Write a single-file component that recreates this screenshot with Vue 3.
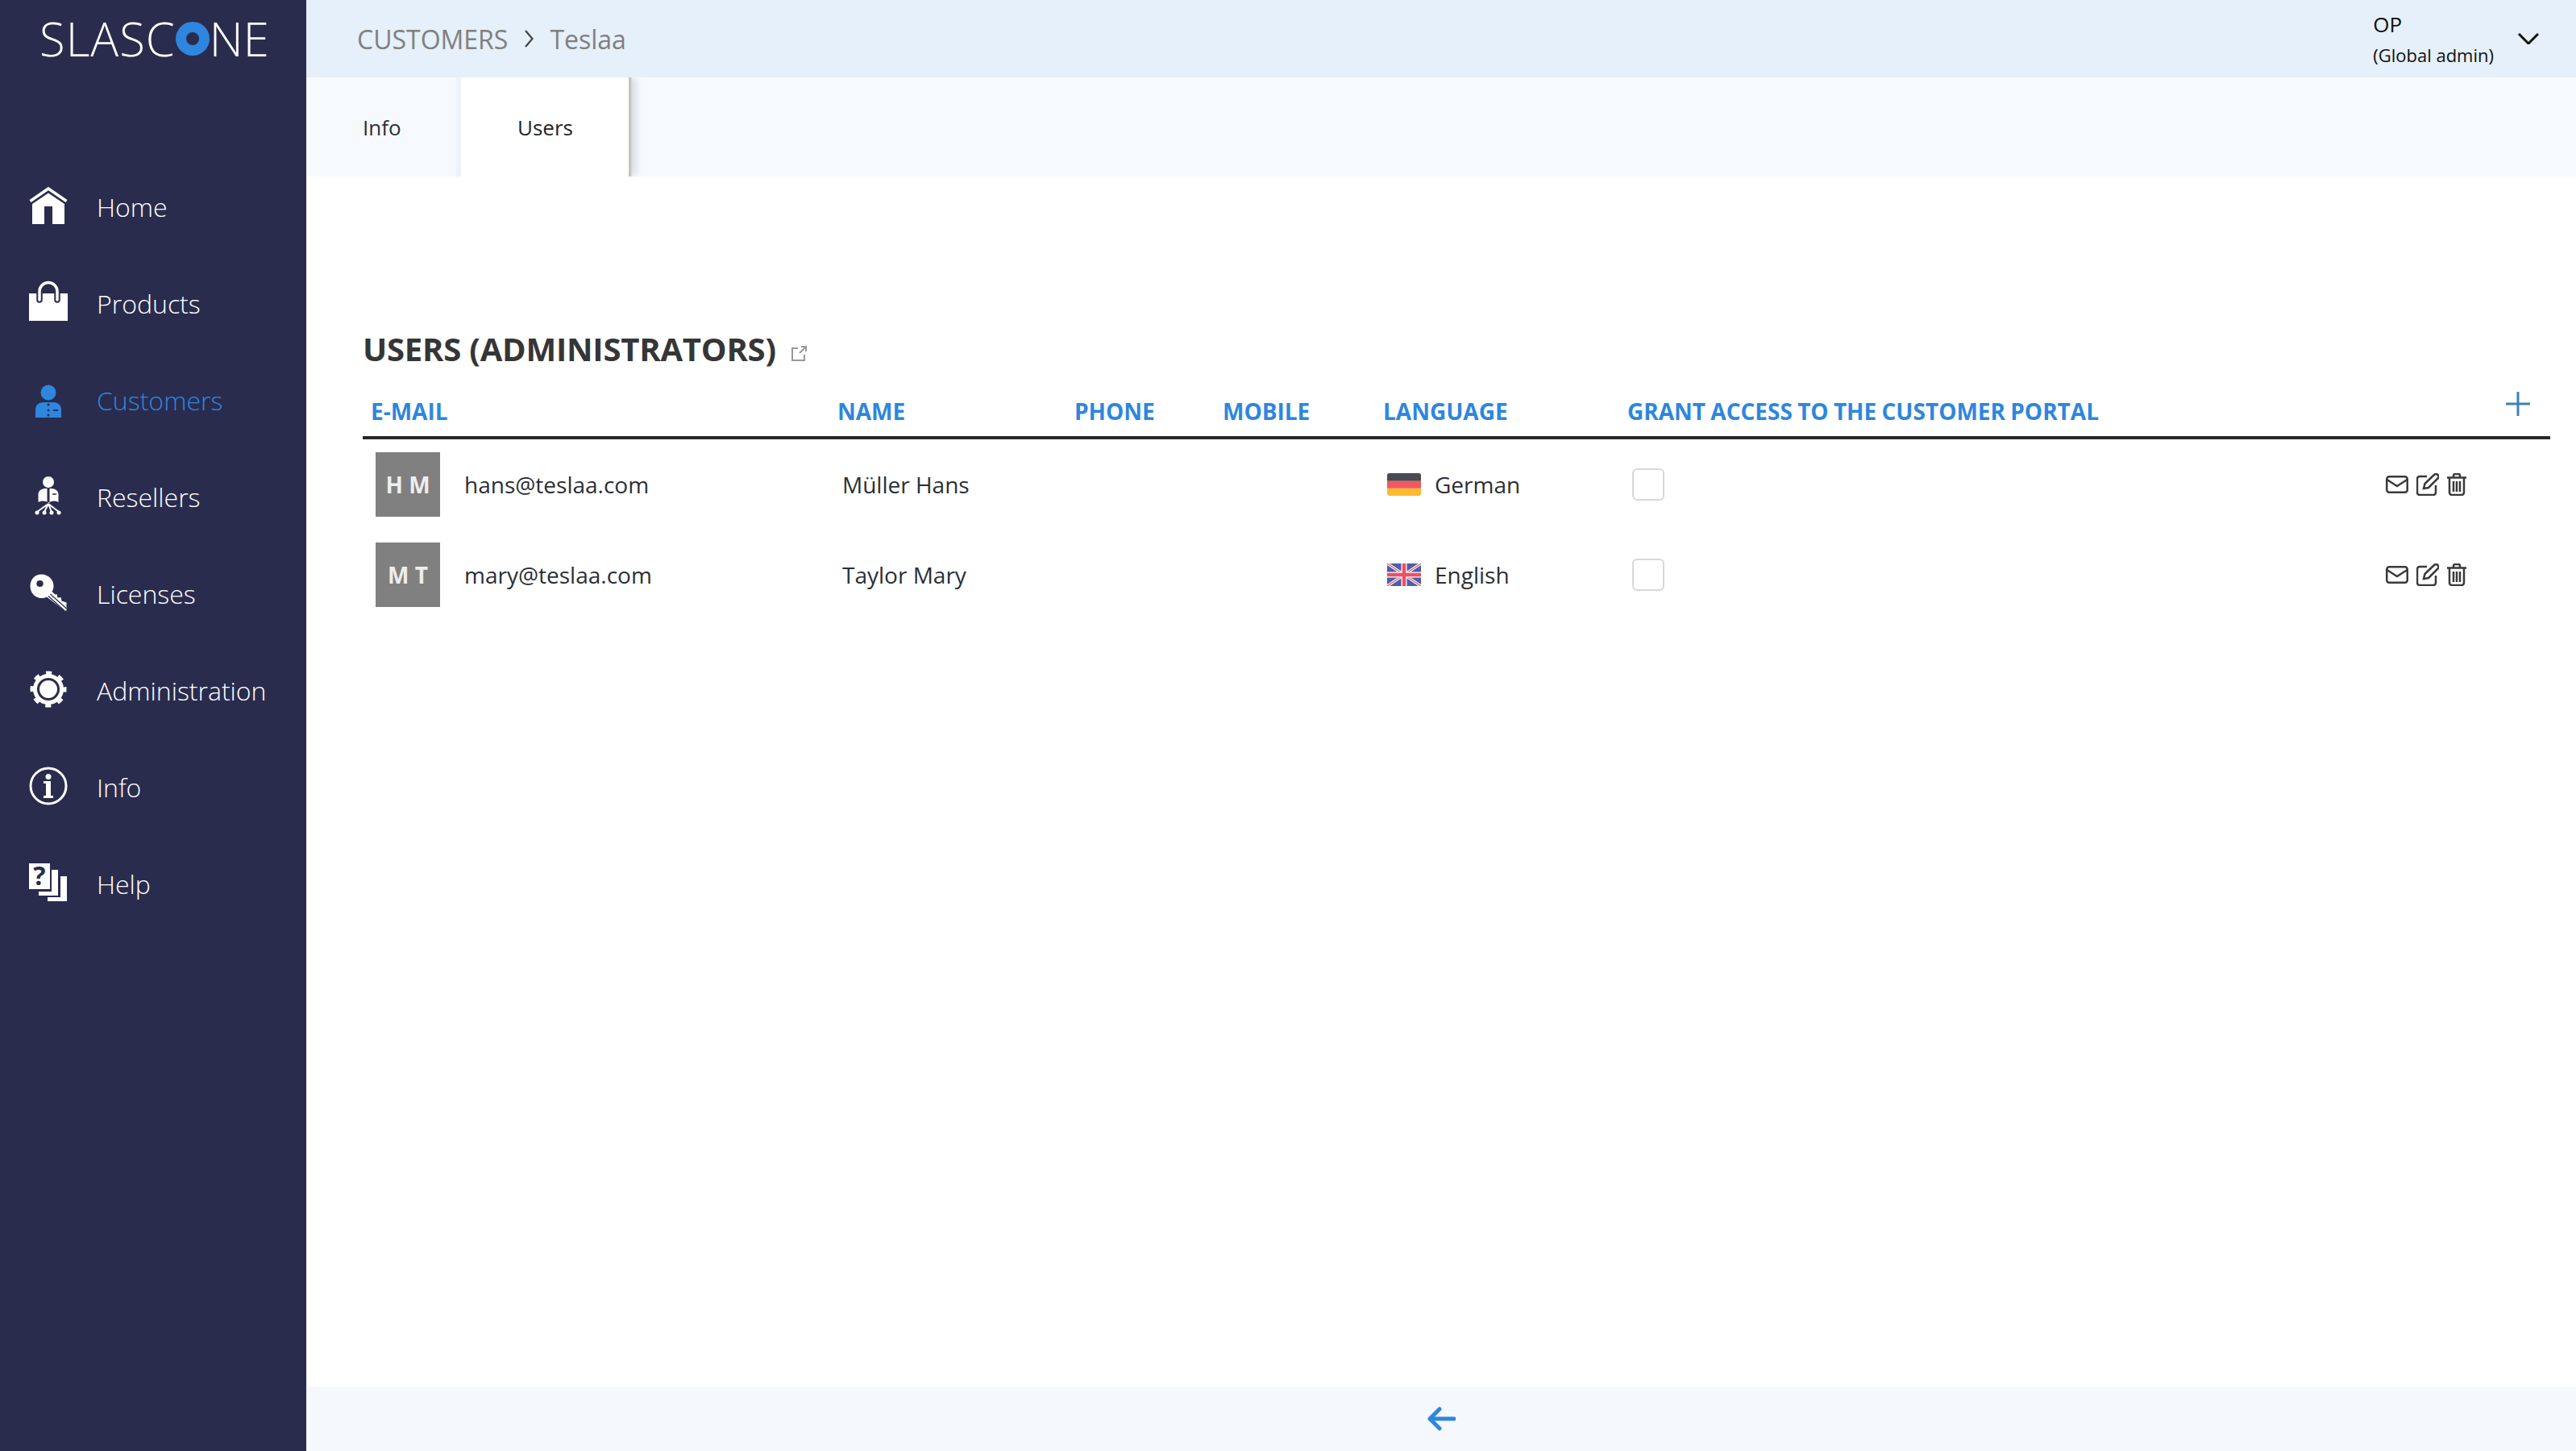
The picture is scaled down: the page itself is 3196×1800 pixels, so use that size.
<script setup>
const navItems = [
  { label: 'Home', icon: 'home' },
  { label: 'Products', icon: 'bag' },
  { label: 'Customers', icon: 'customer', active: true },
  { label: 'Resellers', icon: 'reseller' },
  { label: 'Licenses', icon: 'key' },
  { label: 'Administration', icon: 'gear' },
  { label: 'Info', icon: 'info' },
  { label: 'Help', icon: 'help' },
]

const users = [
  { initials: 'H M', email: 'hans@teslaa.com', name: 'Müller Hans', language: 'German', flag: 'de' },
  { initials: 'M T', email: 'mary@teslaa.com', name: 'Taylor Mary', language: 'English', flag: 'uk' },
]

const navy = '#2a2c4e'
</script>

<template>
  <div class="app">
    <aside class="sidebar">
      <div class="logo">
        <span class="logo-start">SLASC</span>
        <svg class="logo-o" viewBox="0 0 42 42"><circle cx="21" cy="21" r="21" fill="#2e86de" /><circle cx="21" cy="21" r="8" :fill="navy" /></svg>
        <span>NE</span>
      </div>
      <nav class="nav">
        <a v-for="item in navItems" :key="item.label" class="nav-item" :class="{ active: item.active }">
          <svg class="nav-icon" viewBox="0 0 48 48" fill="currentColor">
            <template v-if="item.icon === 'home'">
              <path d="M1.500 17.500 24 2l22.500 15.500" fill="none" stroke="currentColor" stroke-width="3.500" />
              <path d="M24 7.500 44 21v25H29V24H19v22H4V21z" />
            </template>
            <template v-else-if="item.icon === 'bag'">
              <path d="M0 12h48v34H0z" />
              <path d="M13 20V9.500a11 11 0 0 1 22 0V20" fill="none" :stroke="navy" stroke-width="7.500" stroke-linecap="round" />
              <path d="M13 20V9.500a11 11 0 0 1 22 0V20" fill="none" stroke="currentColor" stroke-width="3.500" stroke-linecap="round" />
            </template>
            <template v-else-if="item.icon === 'customer'">
              <circle cx="24" cy="15" r="9.500" />
              <path d="M8 46V36c0-6 5-9 10-9h12c5 0 10 3 10 9v10z" />
              <g :fill="navy">
                <circle cx="24" cy="30" r="1.500" />
                <circle cx="24" cy="37" r="1.500" />
                <circle cx="24" cy="43" r="1.500" />
                <rect x="30" y="36" width="6" height="2" />
              </g>
            </template>
            <template v-else-if="item.icon === 'reseller'">
              <circle cx="24" cy="6" r="7" />
              <path d="M11.500 31V21c0-4 4-7 9-7h7c5 0 9 3 9 7v10c-4-2-8-2-12 1-4-3-8-3-13-1z" />
              <path d="M24 14v17" :stroke="navy" stroke-width="3" />
              <path d="M29 21h5" :stroke="navy" stroke-width="1.500" />
              <path d="M24 33 10 43M24 33l-5 10M24 33l4 10M24 33l13 10" fill="none" stroke="currentColor" stroke-width="2" />
              <circle cx="10" cy="44" r="2.500" />
              <circle cx="19" cy="44" r="2.500" />
              <circle cx="28" cy="44" r="2.500" />
              <circle cx="37" cy="44" r="2.500" />
            </template>
            <template v-else-if="item.icon === 'key'">
              <path fill-rule="evenodd" d="M15.500 0.500C24 0.500 30.500 7 30.500 15c0 3-.8 5-2 7l4 3.500 2-.5 1 4.500 4-.5 1 4.500 6 2v10H44L22 28.500c-2 1-4 1.500-6.500 1.500C7.500 30 1.500 23.500 1.500 15S7.500.5 15.500.5zM13.500 8a4.200 4 0 1 0 0 8 4.200 4 0 0 0 0-8z" />
              <path d="M24 27.500 44 45.500M26.500 25 46.500 43" fill="none" :stroke="navy" stroke-width="1.200" />
            </template>
            <template v-else-if="item.icon === 'gear'">
              <circle cx="24" cy="23" r="11" />
              <circle cx="24" cy="23" r="16.500" fill="none" stroke="currentColor" stroke-width="5" />
              <circle cx="24" cy="23" r="20" fill="none" stroke="currentColor" stroke-width="5" stroke-dasharray="7 8.708" stroke-dashoffset="3.500" />
            </template>
            <template v-else-if="item.icon === 'info'">
              <circle cx="24" cy="23" r="22" fill="none" stroke="currentColor" stroke-width="3" />
              <circle cx="24" cy="11.500" r="3.500" />
              <path d="M18 17h9v18h3v3H18v-3h3V20h-3z" />
            </template>
            <template v-else>
              <path d="M0-1h26v32H0z" />
              <path d="M28 7h8v32H12v-5h16zM39 15h8v31H23v-5h16z" />
              <text x="13" y="26" text-anchor="middle" class="help-mark" :fill="navy">?</text>
            </template>
          </svg>
          <span>{{ item.label }}</span>
        </a>
      </nav>
    </aside>

    <div class="main">
      <header class="topbar">
        <div class="crumbs">
          <span>CUSTOMERS</span>
          <svg class="crumb-sep" viewBox="0 0 12 24"><path d="M2 2l8.500 10L2 22" fill="none" stroke="#444" stroke-width="2.200" /></svg>
          <span>Teslaa</span>
        </div>
        <div class="account">
          <div class="account-text">
            <div class="account-name">OP</div>
            <div class="account-role">(Global admin)</div>
          </div>
          <svg class="account-arrow" viewBox="0 0 26 14"><path d="M1 1l12 12L25 1" fill="none" stroke="#111" stroke-width="3" /></svg>
        </div>
      </header>

      <div class="tabs">
        <div class="tab">Info</div>
        <div class="tab tab-active">Users</div>
      </div>

      <section class="content">
        <h1 class="title">
          USERS (ADMINISTRATORS)
          <svg class="ext" viewBox="0 0 20 20" fill="none" stroke="#999" stroke-width="2"><path d="M9 3H2v15h15v-7M11 9l8-8M13 1h6v6" /></svg>
        </h1>
        <table class="users">
          <colgroup>
            <col style="width: 579px" />
            <col style="width: 294px" />
            <col style="width: 184px" />
            <col style="width: 199px" />
            <col style="width: 303px" />
            <col />
            <col style="width: 214px" />
          </colgroup>
          <thead>
            <tr>
              <th>E-MAIL</th>
              <th>NAME</th>
              <th>PHONE</th>
              <th>MOBILE</th>
              <th>LANGUAGE</th>
              <th>GRANT ACCESS TO THE CUSTOMER PORTAL</th>
              <th class="add-cell">
                <svg class="add" viewBox="0 0 30 30"><path d="M15 0v30M0 15h30" stroke="#3b83b5" stroke-width="3" /></svg>
              </th>
            </tr>
          </thead>
          <tbody>
            <tr v-for="user in users" :key="user.email">
              <td>
                <div class="identity">
                  <div class="avatar">{{ user.initials }}</div>
                  <span>{{ user.email }}</span>
                </div>
              </td>
              <td class="name">{{ user.name }}</td>
              <td></td>
              <td></td>
              <td>
                <div class="language">
                  <svg v-if="user.flag === 'de'" class="flag" viewBox="0 0 42 28">
                    <rect width="42" height="28" rx="3" fill="#f8bb33" />
                    <path d="M0 9.500h42v9H0z" fill="#f25767" />
                    <path d="M0 9.500V3a3 3 0 0 1 3-3h36a3 3 0 0 1 3 3v6.500z" fill="#464b55" />
                  </svg>
                  <svg v-else class="flag" viewBox="0 0 42 28">
                    <rect width="42" height="28" rx="3" fill="#4a5fae" />
                    <path d="M0 0l42 28M42 0 0 28" stroke="#fff" stroke-width="3.500" />
                    <path d="M0 0l42 28M42 0 0 28" stroke="#ef5064" stroke-width="1.200" />
                    <path d="M21 0v28M0 14h42" stroke="#fff" stroke-width="7" />
                    <path d="M21 0v28M0 14h42" stroke="#ef5064" stroke-width="4.500" />
                  </svg>
                  <span>{{ user.language }}</span>
                </div>
              </td>
              <td><div class="check"></div></td>
              <td>
                <div class="actions">
                  <svg class="act-mail" viewBox="0 0 28 22" fill="none" stroke="#3a3a3a" stroke-width="2.500"><rect x="1.250" y="1.250" width="25.500" height="19.500" rx="3" /><path d="M1.500 5 14 13 26.500 5" /></svg>
                  <svg class="act-edit" viewBox="0 0 28 28" fill="none" stroke="#3a3a3a" stroke-width="2.500"><path d="M13 4H4a3 3 0 0 0-3 3v17a3 3 0 0 0 3 3h17a3 3 0 0 0 3-3v-9" /><path d="M9 19l1.500-6L22 2a3 3 0 0 1 4.500 4.500L15 18z" /></svg>
                  <svg class="act-trash" viewBox="0 0 24 28" fill="none" stroke="#3a3a3a" stroke-width="2.500"><path d="M0 5.500h24M8 5V3a2 2 0 0 1 2-2h4a2 2 0 0 1 2 2v2M3 6v18a3 3 0 0 0 3 3h12a3 3 0 0 0 3-3V6M8 10v13M12 10v13M16 10v13" /></svg>
                </div>
              </td>
            </tr>
          </tbody>
        </table>
      </section>

      <footer class="bottom">
        <svg class="back" viewBox="0 0 35 30" fill="none" stroke="#2e86de" stroke-width="5" stroke-linecap="round" stroke-linejoin="round"><path d="M33 15H3M15 3 3 15l12 12" /></svg>
      </footer>
    </div>
  </div>
</template>

<style scoped>
.app {
  display: flex;
  height: 1800px;
  font-family: "Open Sans", "Liberation Sans", sans-serif;
  color: #2b2f36;
  background: #fff;
}

.sidebar {
  flex: 0 0 380px;
  background: #2a2c4e;
  color: #fff;
}

.logo {
  display: flex;
  align-items: center;
  height: 96px;
  padding-left: 49px;
  font-size: 58px;
  font-weight: 350;
  line-height: 96px;
}

.logo-start {
  letter-spacing: 1px;
}

.nav {
  margin-top: 100px;
}

.logo-o {
  width: 42px;
  height: 42px;
}

.nav-item {
  display: flex;
  align-items: center;
  gap: 36px;
  height: 120px;
  padding-left: 36px;
  font-size: 32px;
  font-weight: 300;
}

.nav-item.active {
  color: #2e86de;
}

.nav-icon {
  flex: none;
  width: 48px;
  height: 48px;
  overflow: visible;
}

.help-mark {
  font-size: 32px;
  font-weight: 700;
}

.main {
  flex: 1;
  display: flex;
  flex-direction: column;
  min-width: 0;
}

.topbar {
  display: flex;
  align-items: center;
  justify-content: space-between;
  height: 96px;
  padding: 0 46px 0 63px;
  background: #e5f0fa;
}

.crumbs {
  display: flex;
  align-items: center;
  gap: 20px;
  font-size: 32px;
  color: #808080;
}

.crumb-sep {
  width: 12px;
  height: 24px;
}

.account {
  display: flex;
  align-items: center;
  gap: 30px;
  color: #111;
}

.account-text {
  padding-top: 2px;
}

.account-name {
  font-size: 26px;
  line-height: 36px;
}

.account-role {
  margin-top: 2px;
  font-size: 22px;
  line-height: 36px;
}

.account-arrow {
  width: 26px;
  height: 14px;
}

.tabs {
  display: flex;
  height: 123px;
  background: #f6faff;
}

.tab {
  display: flex;
  align-items: center;
  box-sizing: border-box;
  width: 192px;
  padding: 1px 0 0 70px;
  border-right: 6px solid #ecf3fb;
  font-size: 26px;
}

.tab-active {
  width: 208px;
  padding-left: 70px;
  border-right: 0;
  font-weight: 500;
  color: #1f2329;
  background: #fff;
  box-shadow: 3px 0 1px #c4c4c4, 8px 0 10px rgba(0, 0, 0, 0.14);
  clip-path: inset(0 -24px 0 0);
}

.content {
  flex: 1;
  padding: 186px 32px 0 70px;
}

.title {
  display: flex;
  align-items: center;
  gap: 18px;
  margin: 0;
  height: 54px;
  font-size: 40px;
  font-weight: 700;
  letter-spacing: -0.2px;
  color: #363636;
}

.ext {
  width: 20px;
  height: 20px;
  margin-top: 14px;
}

.users {
  width: 100%;
  margin-top: 32px;
  table-layout: fixed;
  border-collapse: collapse;
}

th {
  height: 52px;
  padding: 0 0 12px 10px;
  box-sizing: border-box;
  text-align: left;
  font-size: 28px;
  font-weight: 700;
  word-spacing: -1px;
  white-space: nowrap;
  color: #2e86de;
  border-bottom: 4px solid #26282c;
}

.add-cell {
  vertical-align: top;
  padding: 0 25px 0 0;
}

.add {
  width: 30px;
  height: 30px;
  display: block;
  margin: -5px 0 0 auto;
}

td {
  height: 112px;
  padding: 0;
  font-size: 28px;
}

.identity {
  display: flex;
  align-items: center;
  gap: 30px;
  padding-left: 16px;
}

.avatar {
  display: flex;
  align-items: center;
  justify-content: center;
  width: 80px;
  height: 80px;
  background: #808080;
  color: #eee;
  font-size: 28px;
  font-weight: 700;
}

.name {
  padding-left: 16px;
}

.language {
  display: flex;
  align-items: center;
  gap: 17px;
  padding-left: 15px;
}

.flag {
  width: 42px;
  height: 28px;
}

.check {
  width: 40px;
  height: 40px;
  margin-left: 16px;
  border: 2px solid #d8d8d8;
  border-radius: 6px;
  box-sizing: border-box;
}

.actions {
  display: flex;
  align-items: center;
  gap: 10px;
  padding-left: 10px;
}

.act-mail {
  width: 28px;
  height: 22px;
}

.act-edit {
  width: 28px;
  height: 28px;
}

.act-trash {
  width: 24px;
  height: 28px;
}

.bottom {
  display: flex;
  align-items: center;
  justify-content: center;
  height: 80px;
  background: #f5f9fe;
}

.back {
  width: 35px;
  height: 30px;
}
</style>
